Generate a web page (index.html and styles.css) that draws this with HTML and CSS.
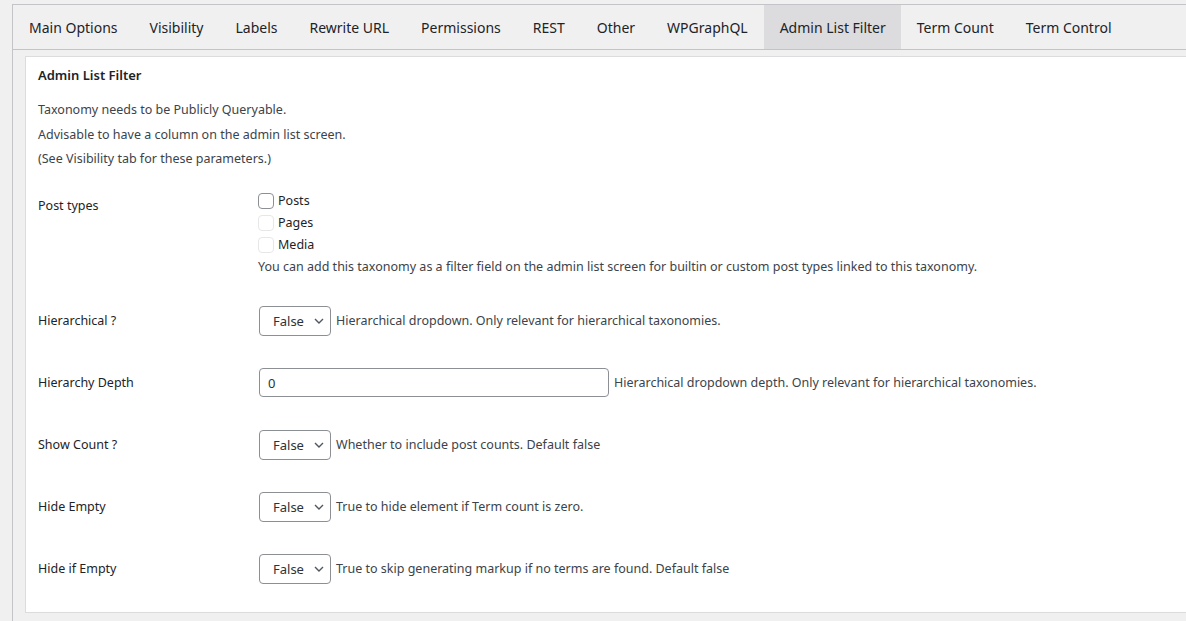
FILE: index.html
```html
<!DOCTYPE html>
<html>
<head>
<meta charset="utf-8">
<link rel="stylesheet" href="styles.css">
</head>
<body>
<div class="wrap">
  <nav class="tabs">
    <span class="tab">Main Options</span>
    <span class="tab">Visibility</span>
    <span class="tab">Labels</span>
    <span class="tab">Rewrite URL</span>
    <span class="tab">Permissions</span>
    <span class="tab">REST</span>
    <span class="tab">Other</span>
    <span class="tab">WPGraphQL</span>
    <span class="tab active">Admin List Filter</span>
    <span class="tab">Term Count</span>
    <span class="tab">Term Control</span>
  </nav>
  <section class="panel">
    <h2 class="title">Admin List Filter</h2>
    <div class="intro">
      <p>Taxonomy needs to be Publicly Queryable.</p>
      <p>Advisable to have a column on the admin list screen.</p>
      <p>(See Visibility tab for these parameters.)</p>
    </div>
    <div class="form">
      <div class="row row-top">
        <div class="label label-top">Post types</div>
        <div class="field">
          <label class="check"><span class="box"></span>Posts</label>
          <label class="check"><span class="box box-dim"></span>Pages</label>
          <label class="check"><span class="box box-dim"></span>Media</label>
          <div class="desc">You can add this taxonomy as a filter field on the admin list screen for builtin or custom post types linked to this taxonomy.</div>
        </div>
      </div>
      <div class="row">
        <div class="label">Hierarchical ?</div>
        <div class="field inline">
          <span class="select">False<svg class="chev" viewBox="0 0 10 6" width="10" height="6"><path d="M1 1l4 4 4-4" fill="none" stroke="#50575e" stroke-width="1.4"/></svg></span>
          <span class="help">Hierarchical dropdown. Only relevant for hierarchical taxonomies.</span>
        </div>
      </div>
      <div class="row">
        <div class="label">Hierarchy Depth</div>
        <div class="field inline">
          <span class="input">0</span>
          <span class="help">Hierarchical dropdown depth. Only relevant for hierarchical taxonomies.</span>
        </div>
      </div>
      <div class="row">
        <div class="label">Show Count ?</div>
        <div class="field inline">
          <span class="select">False<svg class="chev" viewBox="0 0 10 6" width="10" height="6"><path d="M1 1l4 4 4-4" fill="none" stroke="#50575e" stroke-width="1.4"/></svg></span>
          <span class="help">Whether to include post counts. Default false</span>
        </div>
      </div>
      <div class="row">
        <div class="label">Hide Empty</div>
        <div class="field inline">
          <span class="select">False<svg class="chev" viewBox="0 0 10 6" width="10" height="6"><path d="M1 1l4 4 4-4" fill="none" stroke="#50575e" stroke-width="1.4"/></svg></span>
          <span class="help">True to hide element if Term count is zero.</span>
        </div>
      </div>
      <div class="row">
        <div class="label">Hide if Empty</div>
        <div class="field inline">
          <span class="select">False<svg class="chev" viewBox="0 0 10 6" width="10" height="6"><path d="M1 1l4 4 4-4" fill="none" stroke="#50575e" stroke-width="1.4"/></svg></span>
          <span class="help">True to skip generating markup if no terms are found. Default false</span>
        </div>
      </div>
    </div>
  </section>
</div>
</body>
</html>
```

FILE: styles.css
```css
* { box-sizing: border-box; }
html, body { margin: 0; padding: 0; }
body {
  background: #f0f0f1;
  font-family: "Noto Sans", "Open Sans", sans-serif;
  color: #3c434a;
  font-size: 12.5px;
  width: 1186px;
  height: 621px;
  overflow: hidden;
}
.wrap {
  margin: 4px 0 0 12px;
  border-top: 1px solid #c3c4c7;
  border-left: 1px solid #c3c4c7;
  height: 617px;
}
.tabs {
  display: flex;
  height: 45px;
  border-bottom: 1px solid #c3c4c7;
  padding-left: 0;
}
.tab {
  display: flex;
  align-items: center;
  padding: 0 16px;
  font-size: 14px;
  color: #1d2327;
  white-space: nowrap;
}
.tab.active { background: #dcdcde; padding-right: 15px; }
.panel {
  margin: 6px 0 0 12px;
  background: #fff;
  border: 1px solid #dcdcde;
  border-right: none;
  height: 557px;
  padding: 0 12px;
}
.title {
  margin: 0;
  padding-top: 10px;
  font-size: 13px;
  font-weight: 600;
  color: #1d2327;
  line-height: 17px;
}
.intro { margin-top: 14px; }
.intro p { margin: 0; line-height: 24.5px; }
.form { margin-top: 6px; }
.row {
  display: flex;
  align-items: center;
  padding: 15px 0;
  min-height: 62px;
}
.row-top { align-items: flex-start; padding: 12px 0 13px; }
.label {
  width: 220px;
  flex: none;
  color: #1d2327;
}
.label-top { padding-top: 7px; }
.field { display: flex; flex-direction: column; }
.field.inline { flex-direction: row; align-items: center; }
.check {
  display: flex;
  align-items: center;
  height: 22px;
  color: #1d2327;
}
.box {
  width: 16px;
  height: 16px;
  border: 1px solid #8c8f94;
  border-radius: 4px;
  margin-right: 4px;
  background: #fff;
}
.box-dim { border-color: #e6e7e8; }
.desc { margin-top: 0; line-height: 21px; color: #3c434a; }
.select {
  display: inline-flex;
  align-items: center;
  justify-content: space-between;
  width: 72px;
  height: 30px;
  border: 1px solid #8c8f94;
  border-radius: 4px;
  padding: 0 6px 0 13px;
  color: #2c3338;
  font-size: 13px;
  margin-left: 1px;
}
.input {
  display: inline-flex;
  align-items: center;
  width: 350px;
  height: 29px;
  border: 1px solid #8c8f94;
  border-radius: 4px;
  padding: 0 8px;
  color: #2c3338;
  font-size: 13px;
  margin-left: 1px;
}
.help { margin-left: 5px; color: #3c434a; }
```
